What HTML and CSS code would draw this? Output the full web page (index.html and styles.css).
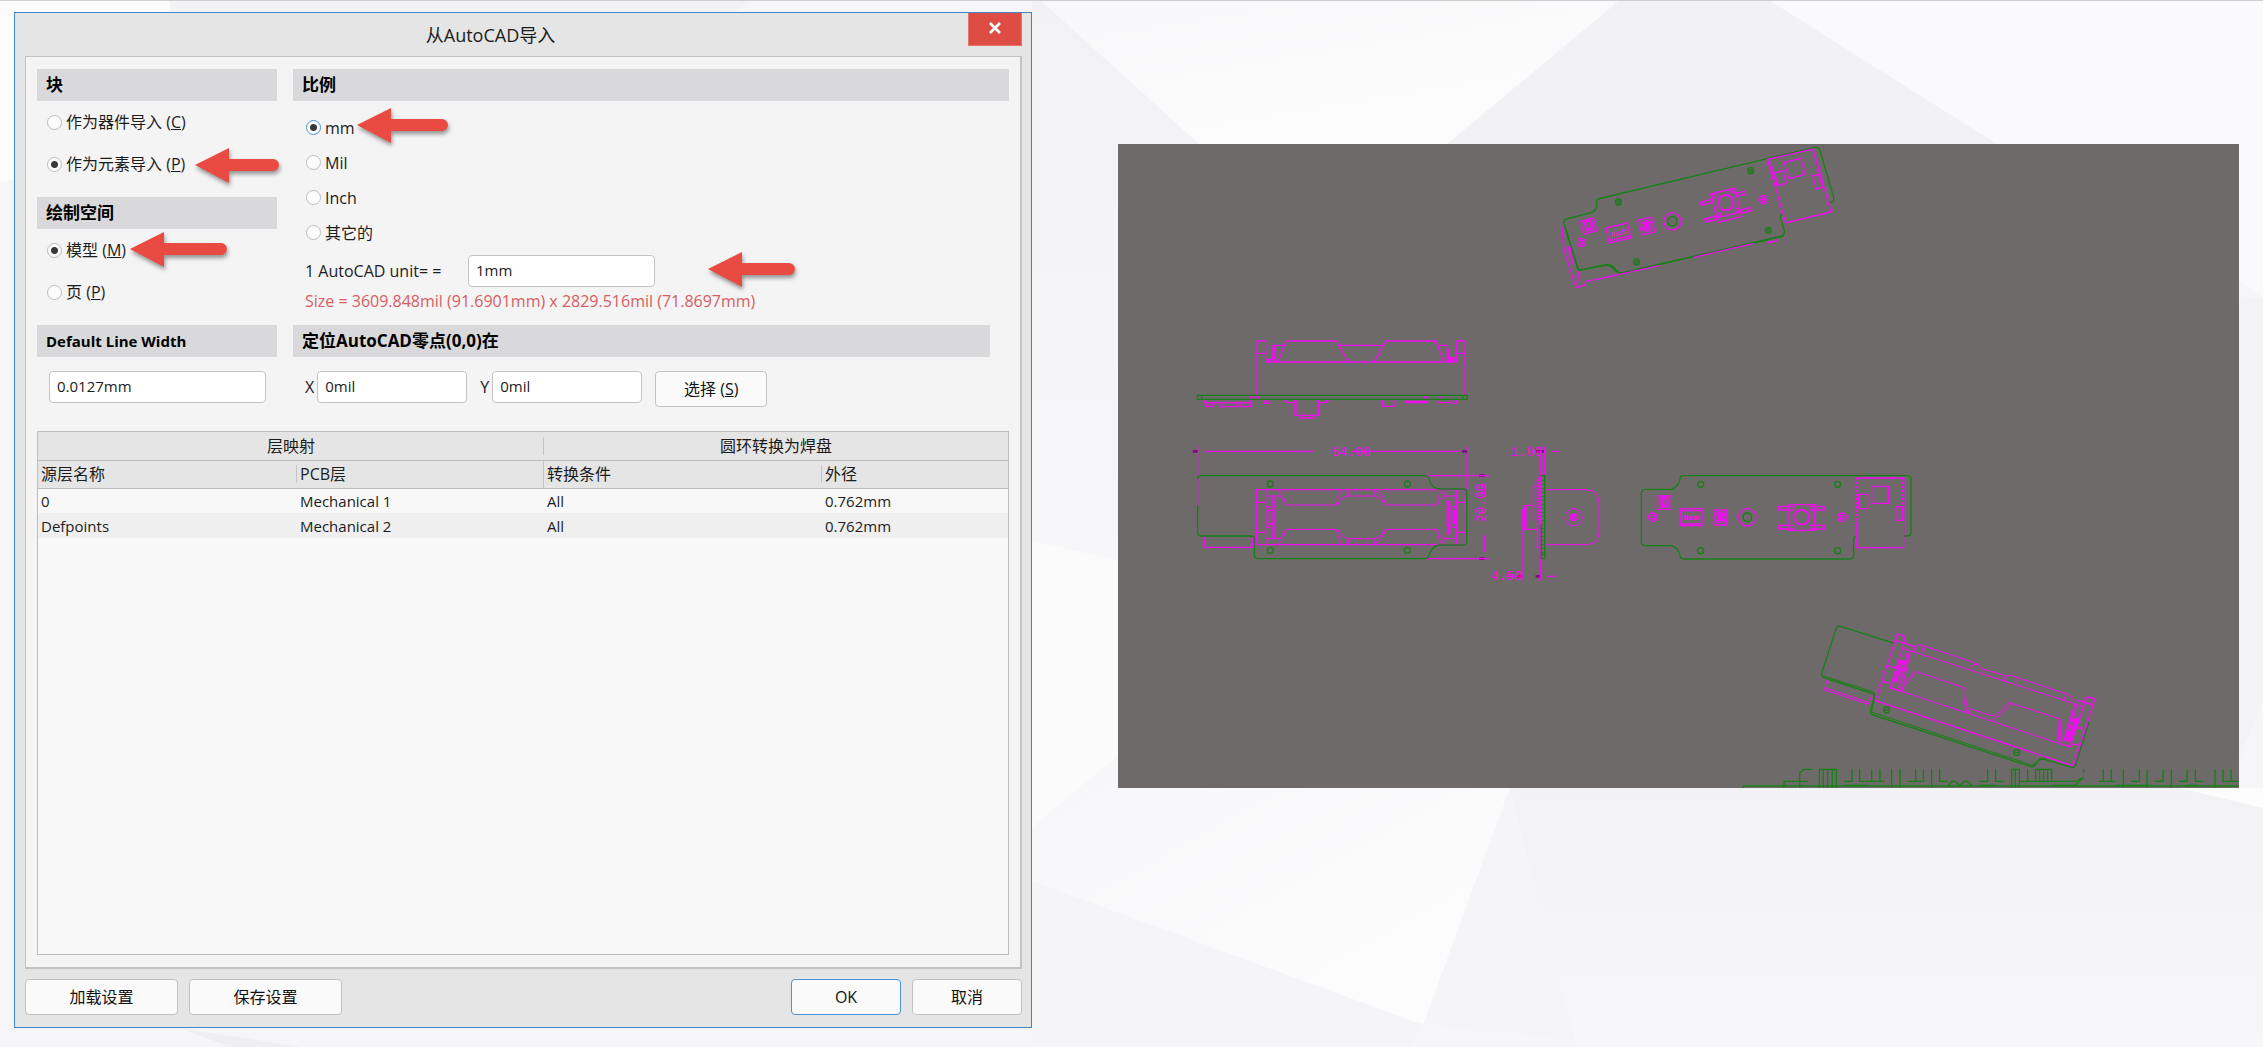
FILE: index.html
```html
<!DOCTYPE html>
<html lang="zh-CN">
<head>
<meta charset="utf-8">
<meta name="viewport" content="width=device-width, initial-scale=1">
<title>从AutoCAD导入</title>
<link rel="stylesheet" href="styles.css">
</head>
<body>
<svg class="backdrop" viewBox="0 0 2263 1047" preserveAspectRatio="none" aria-hidden="true">
  <defs>
    <linearGradient id="fade" x1="0" y1="0" x2="1" y2="1"><stop offset="0" stop-color="#f7f7f9"/><stop offset="1" stop-color="#fdfdfe"/></linearGradient>
    <linearGradient id="dim" x1="0" y1="0" x2="0" y2="1"><stop offset="0" stop-color="#f2f2f4"/><stop offset="1" stop-color="#f7f7f9"/></linearGradient>
  </defs>
  <rect width="2263" height="1047" fill="#f6f6f8"/>
  <path d="M0 0H170V12H14V180L0 182z" fill="#fcfcfd"/>
  <path d="M170 0H750L735 12H170z" fill="#f3f3f5"/>
  <path d="M750 0H1620L1447 144H1199L1040 0z" fill="url(#fade)"/>
  <path d="M1032 0H1040L1199 144H1118V560L1032 541z" fill="url(#dim)"/>
  <path d="M1620 0H1769L1997 144H1447z" fill="#f2f2f4"/>
  <path d="M1769 0H2263V298L2239 280V144H1997z" fill="#fafafc"/>
  <path d="M2239 300L2263 298V700L2239 760z" fill="#f3f3f5"/>
  <path d="M1032 541L1118 560V755L1032 828z" fill="#fbfbfc"/>
  <path d="M1032 828L1118 755V788H1510L1423 1025L1032 881z" fill="url(#fade)"/>
  <path d="M1032 881L1423 1025L1410 1047H1032z" fill="#f5f5f7"/>
  <path d="M1510 788H2200L2263 808V1047H1578L1538 900z" fill="url(#dim)"/>
  <path d="M1510 788L1538 900L1575 1040L1423 1025z" fill="#f5f5f7"/>
  <path d="M2180 788H2263V808z" fill="#fdfdfe"/>
  <path d="M180 1028L300 1047H230z" fill="#efeff1"/>
  <path d="M0 0H2263V1H0z" fill="#cfcfd1"/>
</svg>
<main class="stage">
  <section class="dialog" aria-labelledby="dialog-title">
    <header class="titlebar">
      <h1 id="dialog-title">从AutoCAD导入</h1>
      <button class="close" type="button" aria-label="关闭"><svg viewBox="0 0 12 12" width="12" height="12"><path d="M1 1L11 11M11 1L1 11" stroke="#fff" stroke-width="2.6"/></svg></button>
    </header>

    <form class="panel" id="import-form">
      <div class="options">
        <div class="column">
          <fieldset>
            <legend class="heading">块</legend>
            <label class="choice"><input type="radio" name="block"><span>作为器件导入 (<u>C</u>)</span></label>
            <label class="choice"><input type="radio" name="block" checked><span>作为元素导入 (<u>P</u>)</span>
              <svg class="arrow arrow-element" viewBox="0 0 92 42"><path d="M2 18L36 1V12H80a6 6 0 0 1 0 12H36V36z"/></svg></label>
          </fieldset>
          <fieldset>
            <legend class="heading">绘制空间</legend>
            <label class="choice"><input type="radio" name="space" checked><span>模型 (<u>M</u>)</span>
              <svg class="arrow arrow-model" viewBox="0 0 104 42"><path d="M2 18L36 1V12H93a6 6 0 0 1 0 12H36V36z"/></svg></label>
            <label class="choice"><input type="radio" name="space"><span>页 (<u>P</u>)</span></label>
          </fieldset>
        </div>
        <fieldset class="scale">
          <legend class="heading">比例</legend>
          <div class="units">
            <label class="choice"><input type="radio" name="unit" checked class="focused"><span>mm</span>
              <svg class="arrow arrow-mm" viewBox="0 0 98 42"><path d="M2 18L36 1V12H87a6 6 0 0 1 0 12H36V36z"/></svg></label>
            <label class="choice"><input type="radio" name="unit"><span>Mil</span></label>
            <label class="choice"><input type="radio" name="unit"><span>Inch</span></label>
            <label class="choice"><input type="radio" name="unit"><span>其它的</span></label>
          </div>
          <div class="unit-row">
            <label for="unit-size">1 AutoCAD unit= =</label>
            <input class="field" id="unit-size" type="text" value="1mm">
            <svg class="arrow arrow-unit" viewBox="0 0 94 42"><path d="M2 18L36 1V12H83a6 6 0 0 1 0 12H36V36z"/></svg>
          </div>
          <p class="size">Size = 3609.848mil (91.6901mm) x 2829.516mil (71.8697mm)</p>
        </fieldset>
        <div>
          <h2 class="heading latin"><label for="line-width">Default Line Width</label></h2>
          <div class="line-width"><input class="field" id="line-width" type="text" value="0.0127mm"></div>
        </div>
        <div>
          <h2 class="heading origin-heading">定位AutoCAD零点(0,0)在</h2>
          <div class="origin">
            <label for="origin-x">X</label><input class="field" id="origin-x" type="text" value="0mil">
            <label class="y-label" for="origin-y">Y</label><input class="field" id="origin-y" type="text" value="0mil">
            <button class="btn pick" type="button">选择 (<u>S</u>)</button>
          </div>
        </div>
      </div>

      <div class="grid-box">
        <table>
          <colgroup><col class="c1"><col class="c2"><col class="c3"><col class="c4"></colgroup>
          <thead>
            <tr class="groups"><th colspan="2" scope="colgroup">层映射</th><th colspan="2" scope="colgroup">圆环转换为焊盘</th></tr>
            <tr class="names"><th scope="col">源层名称</th><th scope="col">PCB层</th><th scope="col">转换条件</th><th scope="col">外径</th></tr>
          </thead>
          <tbody>
            <tr><td>0</td><td>Mechanical 1</td><td>All</td><td>0.762mm</td></tr>
            <tr><td>Defpoints</td><td>Mechanical 2</td><td>All</td><td>0.762mm</td></tr>
          </tbody>
        </table>
      </div>
    </form>

    <footer class="actions">
      <button class="btn wide" type="button">加载设置</button>
      <button class="btn wide" type="button">保存设置</button>
      <button class="btn ok" type="submit" form="import-form">OK</button>
      <button class="btn" type="button">取消</button>
    </footer>
  </section>

  <svg class="cad" viewBox="1118 144 1121 644" role="img" aria-label="CAD">
    <rect x="1118" y="144" width="1121" height="644" fill="#6e6a69"/>

    <!-- tilted top view -->
    <g transform="translate(1530 130) scale(.33333)">
      <g class="g">
        <path d="M203 207L855 52Q867 51 870 62L911 203Q913 218 900 217M203 207Q198 212 201 222Q202 240 184 248L108 267Q99 270 102 282L142 413Q146 422 158 419L228 403Q250 402 258 420L268 430L752 319Q765 315 763 302L751 262Q751 254 757 252"/>
        <path d="M105 290L146 421L228 406Q244 404 256 424L272 430L390 403L490 380M670 340L760 318"/>
        <circle cx="265" cy="216" r="9"/><circle cx="662" cy="122" r="9"/><circle cx="715" cy="301" r="9"/><circle cx="319" cy="395" r="9"/><circle cx="265" cy="216" r="4"/><circle cx="662" cy="122" r="4"/><circle cx="715" cy="301" r="4"/><circle cx="319" cy="395" r="4"/>
        <circle cx="427" cy="274" r="14"/>
      </g>
      <g class="m">
        <path d="M100 285Q94 320 105 370L138 473L164 466L167 454L200 448L390 406M490 382L672 340M712 332L716 338L741 332V326M146 424L142 472M112 345L130 405M118 345L128 395M200 448L258 436"/>
        <path d="M712 88L848 57L903 246L767 279zM762 97L812 85L825 133L777 146zM732 129L758 122L769 160L742 168zM848 137L866 133L878 172L859 177z"/>
        <path d="M712 88L743 170M848 57L878 160M722 95L746 168M852 75L872 134" stroke-dasharray="12 5"/>
        <circle cx="427" cy="274" r="26"/><circle cx="154" cy="337" r="12"/><circle cx="154" cy="337" r="5"/><circle cx="700" cy="209" r="13"/><circle cx="700" cy="209" r="6"/><path d="M690 209H710M700 199V219"/>
        <g transform="rotate(-14 176 288)"><path d="M156 268H196V308H156z"/><path d="M168 272V304M185 272V304M172 274H182M172 298H182" stroke-width="7"/></g>
        <g transform="rotate(-13 265 309)"><path d="M232 286H298V332H232zM232 325H298"/><text class="chip" x="241" y="316">flash</text></g>
        <g transform="rotate(-13 350 288)"><path d="M330 265H370V311H330z"/><circle cx="350" cy="288" r="16"/><path d="M344 276V300M350 276V300M357 276V300" stroke-width="6"/></g>
        <g transform="rotate(-14 587 218)"><path d="M550 182H624V256H550zM550 256V270H624V256"/><circle cx="587" cy="218" r="23" stroke-width="6"/><circle cx="558" cy="190" r="6"/><circle cx="616" cy="190" r="6"/><circle cx="558" cy="248" r="6"/><circle cx="616" cy="248" r="6"/><path d="M514 198H548V208H514zM514 250H548V260H514zM626 198H652V208H626zM626 250H658V260H626zM524 198V208M640 198V208M524 250V260M646 250V260"/></g>
      </g>
    </g>

    <!-- side elevation, plan and end views -->
    <g transform="translate(1180 320) scale(.33333)">
      <g class="m">
        <path d="M231 226V63H257V118H279V76H312M231 100H257M855 226V63H830V126M855 100H830M257 126H831M257 118V126M265 118V126M279 76V126M284 76V126"/>
        <path d="M295 124L318 63H469L505 126M582 126L617 63H768L791 126M475 76H610M772 76H802V126M806 85V124M812 112V124M826 112V124"/>
        <path d="M804 88V126M810 114H816V126M824 114H830V126" stroke-width="6"/>
        <path d="M74 240V248H214V240M79 248V260H97V248M120 248V260H171V248M181 248V260H211V248M212 226V245M223 226V240M236 226V240M254 240V250H265V240"/>
        <path d="M311 240L322 248H344M345 240V286H416V240M359 286V294H402V286M418 248H440V240H450M348 240V284M413 240V284M608 240V259H642V240M680 240V248H742V228M734 226V240M748 226V240M680 244H742M773 240V248H814V240M780 226V240M820 240V250H830V240"/>
      </g>
      <path class="g" d="M52 226H862V238H52zM65 226V238M848 226V238"/>
      <g class="m">
        <path d="M53 380V555M38 394H53M74 394H400M572 394H840M846 394H861M861 380V555M515 394H572"/>
        <path class="tip" d="M38 394H53M846 394H861M897 467H914M897 716H914M1068 394H1094M1011 769H1026M1067 769H1082"/>
        <path d="M738 467H928M738 716H928M913 490V530M913 646V696M1082 380V782M1094 380V467M1114 394H1139M1026 570V782M1102 769H1126M975 769H1010"/>
        <text class="dim" x="455" y="407">64.00</text>
        <text class="dim" x="992" y="407">1.00</text>
        <text class="dim" x="932" y="781">4.50</text>
        <text class="dim" transform="translate(914 607) rotate(-90)" x="0" y="0">20.00</text>
        <path d="M230 509H856V674H230zM257 509V674M830 509V674M230 547H257M230 637H257M830 547H856M830 637H856M74 648V682H217V648"/>
        <path d="M295 511Q312 520 316 555H469Q474 526 484 511M318 555Q312 532 296 528H257M473 555Q480 532 505 528H582Q608 535 613 555M582 511Q610 520 617 555H770Q774 526 784 511M772 555Q778 532 792 528H830M505 511V528M582 511V528M293 511V528M792 511V528" stroke-width="3"/>
        <path d="M295 672Q312 660 316 628H469Q474 655 484 672M318 628Q312 650 296 656H257M473 628Q480 650 505 656H582Q608 650 613 628M582 672Q610 660 617 628H770Q774 655 784 672M772 628Q778 650 792 656H830M505 672V656M582 672V656M293 672V656M792 672V656" stroke-width="3"/>
        <path d="M279 528V656M285 528V656M257 560H268V622H257M262 571H279V612H262V571M802 528V656M808 540V645M815 560V622M823 570V612M815 560H828V622H815"/>
        <path d="M806 542V643M823 570V612" stroke-width="10"/>
        <path d="M1094 509H1218Q1257 511 1257 548V636Q1257 674 1218 674H1094" stroke-width="3"/>
        <circle cx="1181" cy="592" r="26" stroke-width="3"/><circle cx="1181" cy="592" r="10"/><circle cx="1181" cy="592" r="5"/>
        <path d="M1026 570H1035M1026 570V614H1035M1034 556V628H1072M1034 556H1060M1060 498V602M1060 498H1072M1072 475V682H1082M1072 475H1082M1038 556V628"/>
        <path d="M1078 480V605M1088 640V665" stroke-width="8" stroke-dasharray="3 6"/>
      </g>
      <g class="g">
        <path d="M53 555V637Q53 648 64 648H213Q223 648 223 658V705Q223 716 236 716H736Q745 715 748 704Q756 678 776 675H850Q860 675 860 666V516Q860 507 850 507H776Q756 504 750 485Q746 467 736 467H64Q53 467 53 478"/>
        <circle cx="271" cy="492" r="9"/><circle cx="682" cy="492" r="9"/><circle cx="271" cy="691" r="9"/><circle cx="682" cy="691" r="9"/>
        <path d="M1082 467H1094V716H1084V615M1084 704H1094"/>
        <path d="M1088 480V700" stroke-dasharray="3 9"/>
      </g>
    </g>

    <!-- top view -->
    <g transform="translate(1600 450) scale(.33333)">
      <g class="g">
        <path d="M912 258H922Q933 258 933 247V88Q933 77 922 77H252Q240 77 240 88Q234 112 214 118H136Q124 118 124 130V275Q124 287 136 287H214Q234 292 240 316Q240 327 252 327H748Q761 327 761 315V270Q761 260 770 258"/>
        <circle cx="302" cy="103" r="9"/><circle cx="713" cy="103" r="9"/><circle cx="302" cy="302" r="9"/><circle cx="713" cy="302" r="9"/><circle cx="442" cy="202" r="13"/>
      </g>
      <g class="m">
        <circle cx="442" cy="202" r="26"/><circle cx="159" cy="202" r="13"/><circle cx="726" cy="202" r="13"/><path d="M154 197H164V207H154zM721 197H731V207H721z"/>
        <path d="M172 138H214V178H172z"/><path d="M185 141V174M201 141V174M186 144H200M186 168H200" stroke-width="8"/>
        <path d="M242 176H306V227H242zM242 182H306M242 222H306"/><text class="chip" x="250" y="209">flash</text>
        <path d="M342 180H380V225H342z"/><circle cx="361" cy="202" r="16"/><path d="M355 190V214M361 190V214M368 190V214" stroke-width="6"/>
        <path d="M567 164H643V241H567z"/><circle cx="605" cy="202" r="22" stroke-width="6"/>
        <path d="M535 169H581V180H535zM535 226H581V237H535zM629 169H675V180H629zM629 226H675V237H629zM545 169V180M568 169V180M545 226V237M568 226V237M642 169V180M665 169V180M642 226V237M665 226V237"/>
        <path d="M769 212V293H911V84H769M775 133H803V176H775zM815 109H866V160H815zM888 170H907V211H888z"/>
        <path d="M771 84V212M909 84V212" stroke-width="6" stroke-dasharray="7 5"/>
      </g>
    </g>

    <!-- tilted plan view and clipped annotation -->
    <g transform="translate(1730 600) scale(.33333)">
      <g class="g">
        <path d="M494 130L334 80Q322 75 318 86L275 220Q274 230 284 234L426 280Q434 284 432 292L421 334Q420 342 430 345L903 500Q914 502 918 490Q928 474 944 478L1024 502Q1034 504 1037 494L1077 366"/>
        <path d="M280 228L428 275Q437 280 433 294L424 336L905 495Q912 497 914 487M926 477Q934 472 948 476" stroke-width="3"/>
        <circle cx="470" cy="330" r="9"/><circle cx="860" cy="457" r="9"/><path d="M464 330H476M854 457H866"/>
        <path d="M40 563V558H1525M162 563V544H235M186 563V556M209 563V520L222 508H247M268 563V508H319V563M280 508V563M293 508V563M307 508V563M342 556H414"/>
        <path d="M342 544H366V508M389 508V544H462M425 508V544M450 508V544M485 508V563M510 508V563M533 544H580V508M557 508V544M605 508V563M629 508V544H653M653 560L665 544H677L689 558L701 544H713L726 558M748 544H773V508M797 508V544H821M749 556H797M845 563V508H868V563M856 508V563M868 544H1036L1061 532M1036 556L1061 532M1061 508V520M893 508V544M917 544V508H965V544M929 508V544M941 508V544M953 508V544M965 556H1036M1108 544H1156M1120 508V544M1144 508V544M1180 508V563M1156 556H1265M1202 544H1228V508M1251 508V563M1275 544H1299V508M1324 508V563M1346 544H1371V508M1396 508V544H1419M1368 556H1404M1455 508V563M1479 508V544H1525M1503 508V544"/>
      </g>
      <g class="m">
        <path d="M436 302L502 102L526 109L518 145L480 264L516 274L541 152M497 122L555 140M1040 300L1090 315M1070 290L1095 297L1030 498L436 302M1070 290L1020 440L986 430M471 197L495 203M455 244L480 250M1060 384L1042 384M1048 436L1028 432"/>
        <path d="M555 140Q565 130 580 137L730 187Q745 190 755 206L828 228Q845 222 862 233L1010 282Q1022 284 1028 300M518 145L1060 320M580 137L575 158M555 140L552 155M722 204Q728 190 745 194M755 206V220M828 228Q822 235 824 243M862 233V252M1010 282Q1002 290 1004 302" stroke-width="3"/>
        <path d="M478 262L986 430M510 272L553 217Q556 214 562 216L694 260Q706 262 706 275Q706 310 716 340M700 262Q698 300 712 340M716 325L780 346Q795 350 806 338L838 308L988 356L984 430M786 362Q795 350 812 345L845 310M516 266L560 214M992 358V425" stroke-width="3"/>
        <path d="M541 152L505 265M520 180L495 255M512 180L490 250M530 160L510 250M1034 312L1000 425M1040 320L1008 425M1048 355L1020 420M1030 330L1004 420"/>
        <path d="M516 182L498 245M1045 352L1010 425M1038 352L1018 425" stroke-width="7"/>
        <path d="M292 236L283 270L415 313L426 282M286 264L418 308" stroke-width="3"/>
      </g>
    </g>
  </svg>
</main>
</body>
</html>
```
FILE: styles.css
```css
* { box-sizing: border-box; }

body {
  margin: 0;
  color: #1c1c1c;
  background: #f6f6f8;
  font: 16px/24px "Open Sans", "Noto Sans CJK SC", sans-serif;
}

.backdrop {
  position: absolute;
  inset: 0;
  z-index: -1;
  width: 100%;
  height: 100%;
}

.stage {
  display: grid;
  grid-template-columns: 1018fr 1121fr;
  gap: 86px;
  min-height: 100vh;
  padding: 12px 24px 19px 14px;
}

.dialog {
  display: flex;
  flex-direction: column;
  padding: 0 9px 12px 10px;
  border: 1px solid #3f86c9;
  background: #e5e5e5;
}

.titlebar {
  position: relative;
  height: 43px;
}

h1 {
  margin: 0;
  padding: 6px 66px 0 0;
  font-size: 18px;
  font-weight: 400;
  line-height: 32px;
  text-align: center;
}

.close {
  position: absolute;
  top: 0;
  right: 0;
  width: 54px;
  height: 33px;
  padding: 0;
  border: 1px solid #e8736a;
  border-top: 0;
  background: #de4d43;
}

.panel {
  display: flex;
  flex: 1;
  flex-direction: column;
  gap: 24px;
  padding: 12px 11px 12px;
  border: 1px solid #c3c3c3;
  border-right-width: 2px;
  border-bottom-width: 2px;
  background: #f4f4f4;
}

.options {
  display: grid;
  grid-template-columns: 240px 1fr;
  column-gap: 16px;
  row-gap: 12px;
}

.column {
  display: flex;
  flex-direction: column;
  gap: 12px;
}

fieldset {
  min-width: 0;
  margin: 0;
  padding: 0;
  border: 0;
}

.heading {
  display: block;
  width: 100%;
  height: 32px;
  margin: 0;
  padding: 0 9px;
  color: #000;
  background: #d9d9db;
  font-size: 17px;
  font-weight: 700;
  line-height: 32px;
}

.heading.latin { font-size: 15px; }

.origin-heading {
  width: auto;
  margin-right: 19px;
}

.choice {
  position: relative;
  display: flex;
  align-items: center;
  gap: 4px;
  width: max-content;
  height: 42px;
  padding-left: 10px;
}

.choice input {
  width: 15px;
  height: 15px;
  margin: 0;
  border: 1px solid #bcbcbc;
  border-radius: 50%;
  background: #fcfcfc;
  appearance: none;
}

.choice input:checked { background: radial-gradient(circle, #383838 0 3px, #fcfcfc 4px); }
.choice input.focused { border-color: #4a90d9; }

.units { padding: 9px 0 5px 3px; }
.units .choice { height: 35px; }

.arrow {
  position: absolute;
  height: 42px;
  fill: #e94b43;
  filter: drop-shadow(1px 3px 2px #0006);
}

.arrow-element { top: 4px; left: 156px; width: 92px; }
.arrow-model { top: 2px; left: 91px; width: 104px; }
.arrow-mm { top: -3px; left: 59px; width: 98px; }
.arrow-unit { top: -4px; left: 413px; width: 94px; }

.unit-row {
  position: relative;
  display: flex;
  align-items: center;
  justify-content: space-between;
  width: 362px;
  padding-left: 12px;
}

.field {
  min-width: 0;
  height: 32px;
  padding: 0 7px 2px;
  border: 1px solid #c4c4c4;
  border-radius: 4px;
  color: inherit;
  background: #fff;
  font: inherit;
  font-size: 15px;
}

.unit-row .field { width: 187px; }

.size {
  margin: 0;
  padding: 2px 12px 0;
  color: #d75e62;
}

.line-width { padding: 14px 11px 0 12px; }
.line-width .field { width: 100%; }

.origin {
  display: flex;
  align-items: flex-start;
  gap: 3px;
  padding: 14px 0 0 12px;
  line-height: 32px;
}

.origin .field { width: 150px; }
.y-label { padding-left: 10px; }

.btn {
  min-width: 110px;
  height: 36px;
  padding: 0 8px;
  border: 1px solid #c2c2c2;
  border-radius: 4px;
  color: #111;
  background: #fafafa;
  font: inherit;
  font-size: 16px;
}

.pick {
  min-width: 112px;
  margin-left: 10px;
}

.grid-box {
  flex: 1;
  border: 1px solid #bdbdbd;
  background: #f8f8f8;
}

table {
  width: 100%;
  border-collapse: collapse;
  table-layout: fixed;
}

.c1 { width: 259px; }
.c2 { width: 247px; }
.c3 { width: 278px; }

th {
  height: 28px;
  padding: 0 3px;
  border-bottom: 1px solid #bdbdbd;
  background: linear-gradient(#c4c4c4, #c4c4c4) right / 1px 18px no-repeat #e5e5e5;
  font-weight: 400;
  line-height: 22px;
  text-align: left;
}

th:last-child { background: #e5e5e5; }
.names th:nth-child(2) { background-size: 1px 100%; }
.groups th { text-align: center; }

td {
  height: 25px;
  padding: 0 3px;
  font-size: 15px;
}

tbody tr:nth-child(even) { background: #efefef; }

.actions {
  display: flex;
  gap: 11px;
  padding-top: 10px;
}

.wide { width: 153px; }

.ok {
  margin-left: auto;
  border-color: #4a94dc;
}

.cad {
  display: block;
  width: 100%;
  margin-top: 132px;
  overflow: hidden;
}

.g, .m {
  fill: none;
  stroke: #178017;
  stroke-width: 4;
}

.m { stroke: #f20cf2; }

.tip {
  stroke: #7d107d;
  stroke-width: 8;
}

.cad text {
  fill: #f20cf2;
  stroke: none;
  font-family: "Liberation Mono", monospace;
}

.cad .dim { font-size: 39px; }

.cad .chip {
  font-family: "Liberation Sans", sans-serif;
  font-size: 21px;
  font-weight: 700;
}
```
